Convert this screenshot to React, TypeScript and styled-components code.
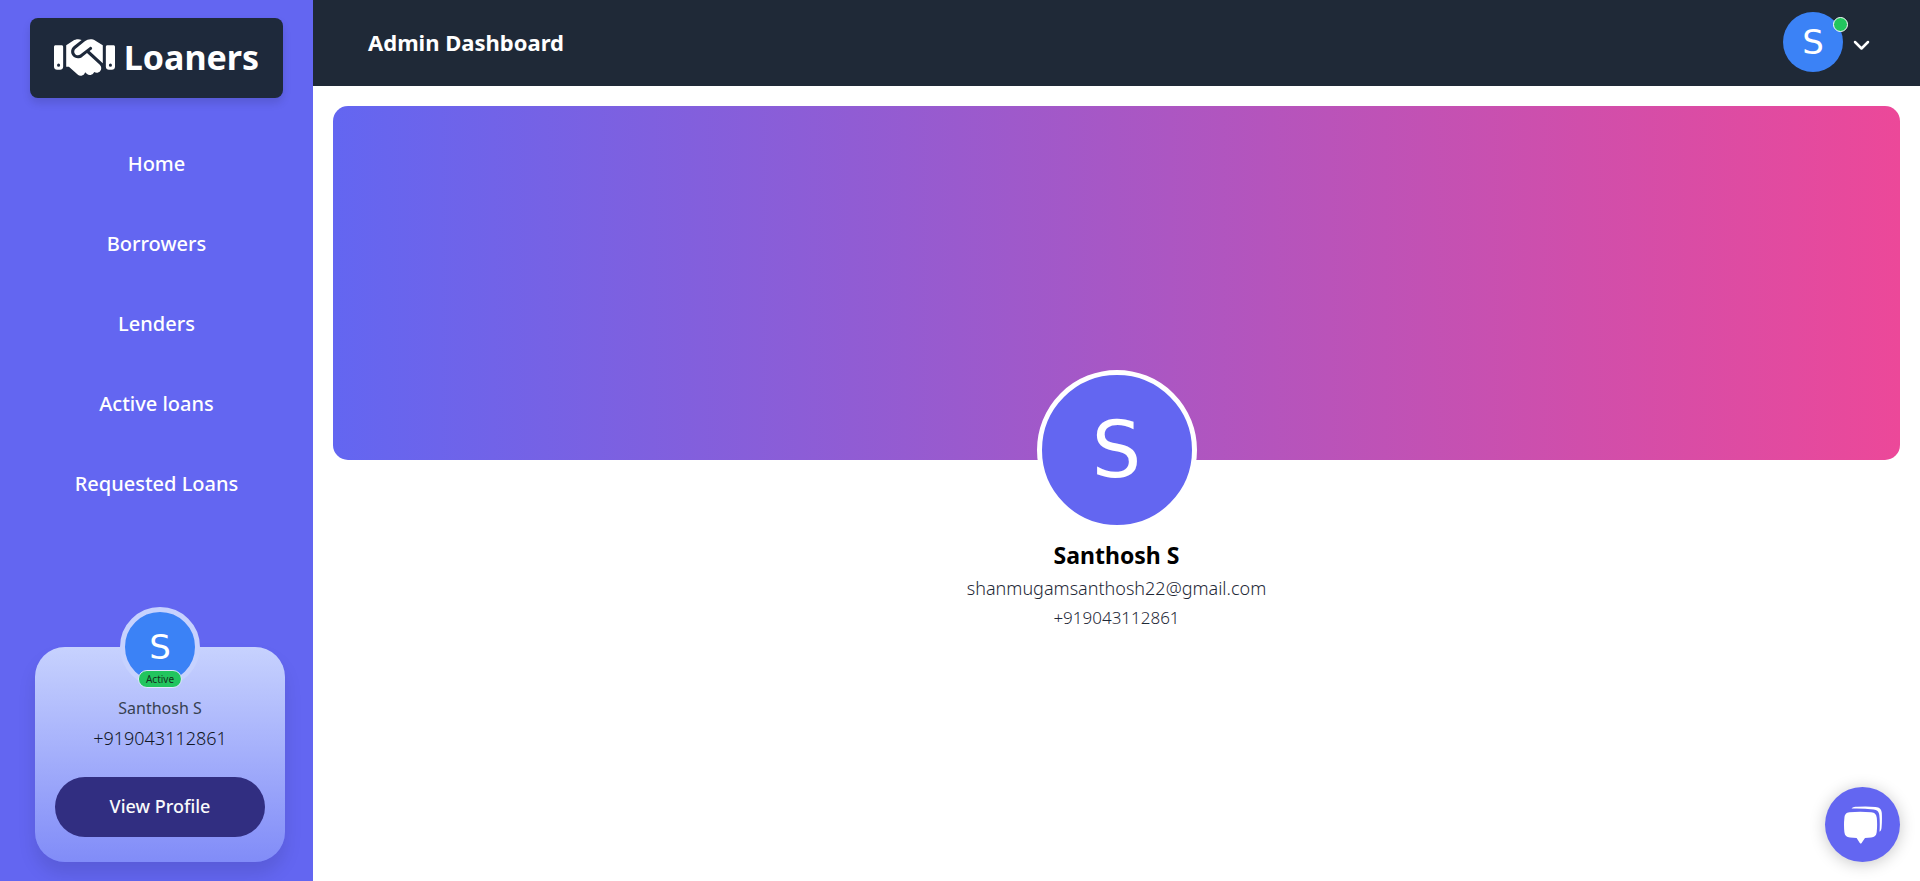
import React from 'react';
import styled, { createGlobalStyle } from 'styled-components';

const GlobalStyle = createGlobalStyle`
  *, *::before, *::after { box-sizing: border-box; }
  body {
    margin: 0;
    background: #ffffff;
    color: #000000;
    font-family: "Noto Sans", sans-serif;
  }
  h1, h2, p, ul { margin: 0; padding: 0; }
  button { font-family: inherit; border: 0; padding: 0; cursor: pointer; }
  a { text-decoration: none; }
`;

const Shell = styled.div`
  display: flex;
  min-height: 100vh;
`;

const Sidebar = styled.aside`
  display: flex;
  flex-direction: column;
  flex: 0 0 313px;
  padding: 18px 30px 19px;
  background: #6366f1;
`;

const Brand = styled.a`
  display: flex;
  align-items: center;
  justify-content: center;
  gap: 9px;
  height: 80px;
  padding-bottom: 2px;
  border-radius: 8px;
  background: #1e293b;
  color: #ffffff;
  box-shadow: 0 5px 8px rgba(0, 0, 0, 0.12);
`;

const BrandName = styled.span`
  font-size: 34px;
  line-height: 48px;
  font-weight: 700;
`;

const NavList = styled.ul`
  margin-top: 25px;
  list-style: none;
`;

const NavLink = styled.a`
  display: flex;
  align-items: center;
  justify-content: center;
  height: 80px;
  color: #ffffff;
  font-size: 20px;
  font-weight: 500;
`;

const UserCard = styled.section`
  display: flex;
  flex-direction: column;
  align-items: center;
  margin: auto -2px 0 5px;
  padding: 0 20px 25px;
  border-radius: 30px;
  background: linear-gradient(to bottom, #c7d2fe, #818cf8);
  box-shadow: 0 12px 18px rgba(0, 0, 0, 0.1);
`;

const Avatar = styled.div<{ $size: number; $font: number; $fill: string; $ring?: string }>`
  position: relative;
  display: flex;
  align-items: center;
  justify-content: center;
  width: ${(p) => p.$size}px;
  height: ${(p) => p.$size}px;
  border: ${(p) => (p.$ring ? `5px solid ${p.$ring}` : '0')};
  border-radius: 50%;
  background: ${(p) => p.$fill};
  color: #ffffff;
  font-family: "DejaVu Sans", sans-serif;
  font-size: ${(p) => p.$font}px;
  line-height: 1;
`;

const CardAvatar = styled(Avatar)`
  margin-top: -40px;
`;

const StatusBadge = styled.span`
  position: absolute;
  bottom: -6px;
  left: 50%;
  transform: translateX(-50%);
  padding: 0 7px;
  border: 1px solid #e0e7ff;
  border-radius: 9px;
  background: #22c55e;
  color: #14301f;
  font-family: "Noto Sans", sans-serif;
  font-size: 10px;
  line-height: 16px;
`;

const CardName = styled.p`
  margin-top: 9px;
  color: #374151;
  font-size: 16px;
  line-height: 24px;
`;

const CardPhone = styled.p`
  margin-top: 4px;
  color: #111827;
  font-size: 18px;
  line-height: 28px;
  font-weight: 300;
`;

const ProfileButton = styled.button`
  align-self: stretch;
  height: 60px;
  margin-top: 25px;
  padding-bottom: 2px;
  border-radius: 30px;
  background: #312e81;
  color: #f9fafb;
  font-size: 18px;
  font-weight: 500;
`;

const Main = styled.main`
  flex: 1;
  min-width: 0;
`;

const Header = styled.header`
  display: flex;
  align-items: center;
  justify-content: space-between;
  height: 86px;
  padding: 0 50px 3px 55px;
  background: #1f2937;
`;

const PageTitle = styled.h1`
  color: #ffffff;
  font-size: 22px;
  line-height: 30px;
  font-weight: 700;
`;

const AccountButton = styled.button`
  display: flex;
  align-items: center;
  gap: 10px;
  background: transparent;
  color: #ffffff;
`;

const OnlineDot = styled.span`
  position: absolute;
  top: 5px;
  right: -5px;
  width: 15px;
  height: 15px;
  border: 1px solid #ffffff;
  border-radius: 50%;
  background: #22c55e;
`;

const Chevron = styled.svg`
  display: block;
  margin-top: 7px;
`;

const Content = styled.div`
  padding: 20px;
`;

const Banner = styled.div`
  height: 354px;
  border-radius: 15px;
  background: linear-gradient(to right, #6366f1, #ec4899);
`;

const Profile = styled.section`
  display: flex;
  flex-direction: column;
  align-items: center;
  margin-top: -90px;
`;

const ProfileName = styled.h2`
  margin: 10px 0 3px;
  font-size: 23px;
  line-height: 30px;
  font-weight: 700;
`;

const ProfileDetail = styled.p<{ $size: number }>`
  color: #1f2937;
  font-size: ${(p) => p.$size}px;
  line-height: 30px;
  font-weight: 300;
`;

const ChatButton = styled.button`
  position: fixed;
  right: 20px;
  bottom: 19px;
  display: flex;
  align-items: center;
  justify-content: center;
  width: 75px;
  height: 75px;
  border-radius: 50%;
  background: #6366f1;
  box-shadow: 0 2px 16px rgba(0, 0, 0, 0.22);
`;

const HandshakeIcon = () => (
  <svg width="61" height="49" viewBox="0 0 640 512" fill="currentColor" aria-hidden="true">
    <path d="M323.4 85.2l-96.8 78.4c-16.1 13-19.2 36.4-7 53.1c12.9 17.8 38 21.3 55.3 7.8l99.3-77.2c7-5.4 17-4.2 22.5 2.8s4.2 17-2.8 22.5l-20.9 16.2L512 316.8V128h-.7l-3.9-2.5L434.8 79c-15.3-9.8-33.2-15-51.4-15c-21.8 0-43 7.5-60 21.2zm22.8 124.4l-51.7 40.2C263 274.3 217.3 268 193.7 235.6c-22.2-30.5-16.6-73.1 12.7-96.8l83.2-67.3c-11.6-4.9-24.1-7.4-36.8-7.4C234 64 215.7 69.6 200 80l-72 48V352h28.2l91.4 83.4c19.6 17.9 49.9 16.5 67.8-3.1c5.5-6.1 9.2-13.2 11.1-20.6l17 15.6c19.5 17.9 49.9 16.6 67.8-2.9c4.5-4.9 7.8-10.6 9.9-16.5c19.4 13 45.8 10.3 62.1-7.5c17.9-19.5 16.6-49.9-2.9-67.8l-134.2-123z" />
    <path d="M16 128c-8.800 0-16 7.200-16 16V352c0 17.700 14.300 32 32 32H64c17.700 0 32-14.300 32-32V144c0-8.800-7.200-16-16-16zM48 320a16 16 0 1 1 0 32 16 16 0 1 1 0-32z" />
    <path d="M560 128c-8.800 0-16 7.200-16 16V352c0 17.700 14.300 32 32 32h32c17.700 0 32-14.300 32-32V144c0-8.800-7.200-16-16-16zM576 336a16 16 0 1 1 32 0 16 16 0 1 1-32 0z" />
  </svg>
);

const ChatIcon = () => (
  <svg width="38" height="38" viewBox="0 0 38 38" fill="#ffffff" aria-hidden="true">
    <path d="M7.500 2.600C9 1 11 .9 13 .8Q22 .2 31.500 .9C35.500 1.200 37.500 3 37.800 7Q38.200 14 37.600 21C37.400 23.500 37 25 35.500 25.800C35.900 20 35.900 14 35.300 9C34.800 5.200 33 3.700 29.500 3.400Q18 2.200 7.500 2.600Z" />
    <path d="M5.500 6.300Q16 5 27 6.300C31 6.800 32.400 8.300 32.800 12Q33.500 19 32.700 26.200C32.300 29.600 30.500 31.100 27.200 31.500L21 32L17.600 36.900Q16.700 38 15.800 36.900L12.600 32L6 31.500C2.500 31.100 .8 29.600 .4 26.200Q-.4 19 .4 12C.8 8.300 2 6.800 5.500 6.300Z" />
  </svg>
);

const NAV_ITEMS = ['Home', 'Borrowers', 'Lenders', 'Active loans', 'Requested Loans'];

export default function App() {
  return (
    <Shell>
      <GlobalStyle />
      <Sidebar>
        <Brand href="#home">
          <HandshakeIcon />
          <BrandName>Loaners</BrandName>
        </Brand>
        <nav aria-label="Main">
          <NavList>
            {NAV_ITEMS.map((item) => (
              <li key={item}>
                <NavLink href={`#${item.toLowerCase().replace(' ', '-')}`}>{item}</NavLink>
              </li>
            ))}
          </NavList>
        </nav>
        <UserCard>
          <CardAvatar $size={80} $font={34} $fill="#3b82f6" $ring="#c7d2fe">
            S
            <StatusBadge>Active</StatusBadge>
          </CardAvatar>
          <CardName>Santhosh S</CardName>
          <CardPhone>+919043112861</CardPhone>
          <ProfileButton type="button">View Profile</ProfileButton>
        </UserCard>
      </Sidebar>
      <Main>
        <Header>
          <PageTitle>Admin Dashboard</PageTitle>
          <AccountButton type="button" aria-label="Account menu">
            <Avatar $size={60} $font={34} $fill="#3b82f6">
              S
              <OnlineDot />
            </Avatar>
            <Chevron width="17" height="11" viewBox="0 0 17 11" aria-hidden="true">
              <path d="M2 2l6.500 6.500L15 2" fill="none" stroke="currentColor" strokeWidth="2.500" strokeLinecap="round" strokeLinejoin="round" />
            </Chevron>
          </AccountButton>
        </Header>
        <Content>
          <Banner />
          <Profile>
            <Avatar $size={160} $font={78} $fill="#6366f1" $ring="#ffffff">S</Avatar>
            <ProfileName>Santhosh S</ProfileName>
            <ProfileDetail $size={18}>shanmugamsanthosh22@gmail.com</ProfileDetail>
            <ProfileDetail $size={17}>+919043112861</ProfileDetail>
          </Profile>
        </Content>
      </Main>
      <ChatButton type="button" aria-label="Open chat">
        <ChatIcon />
      </ChatButton>
    </Shell>
  );
}
